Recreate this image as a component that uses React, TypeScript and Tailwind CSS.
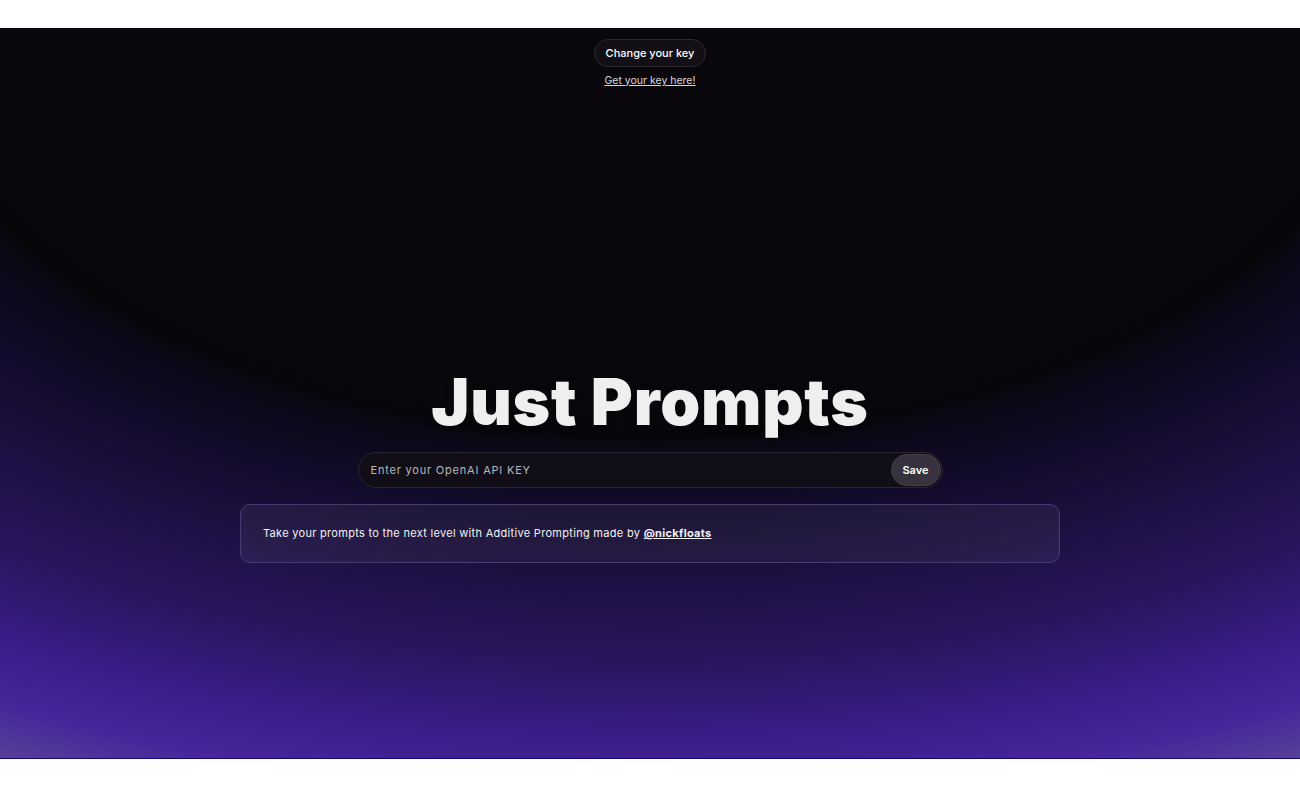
import React from "react";

export default function App() {
  return (
    <div className="bg-white pt-[28px] pb-[29px]" style={{ fontFamily: "Inter, 'Noto Sans', sans-serif" }}>
      <section className="relative h-[731px] border-b border-[#0b0a78] bg-[radial-gradient(ellipse_740px_412px_at_50%_0%,#0a070c_0%,#0a070c_96%,#070509_99%,#0b0714_102%,#130b2c_118%,#1d1042_134%,#28155b_152%,#3a1c87_172%,#46269a_186%,#5a4597_200%)] text-white">
        <div className="flex flex-col items-center pt-[11px]">
          <button className="h-[28px] rounded-full border border-[#2c2a30] bg-[#121015] px-[11px] text-[11px] font-medium text-white">
            Change your key
          </button>
          <a className="mt-[7px] text-[10.5px] leading-[14px] text-[#d8d8d8] underline" href="#">
            Get your key here!
          </a>
        </div>
        <div className="mt-[274px] flex flex-col items-center">
          <h1 className="text-[64px] leading-[80px] font-black tracking-[0.8px] text-[#efefef] [text-shadow:0_2px_6px_rgba(0,0,0,0.5)]">
            Just Prompts
          </h1>
          <div className="mt-[10px] flex h-[36px] w-[585px] items-center rounded-full border border-[#2a2530] bg-[#120e17] pl-[12px] pr-[1px]">
            <span className="flex-1 text-[11px] tracking-[0.8px] text-[#b8b6bc]">Enter your OpenAI API KEY</span>
            <button className="h-[32px] w-[50px] rounded-full border border-[#45404c] bg-[#37323e] text-[11px] font-semibold text-white">
              Save
            </button>
          </div>
          <div className="mt-[16px] flex h-[59px] w-[820px] items-center rounded-[10px] border border-[#4a3c72] bg-[rgba(255,255,255,0.05)] px-[22px]">
            <p className="text-[11px] tracking-[0.3px] text-[#f2f2f2]">
              Take your prompts to the next level with Additive Prompting made by{" "}
              <a href="#" className="font-bold underline">@nickfloats</a>
            </p>
          </div>
        </div>
      </section>
    </div>
  );
}
